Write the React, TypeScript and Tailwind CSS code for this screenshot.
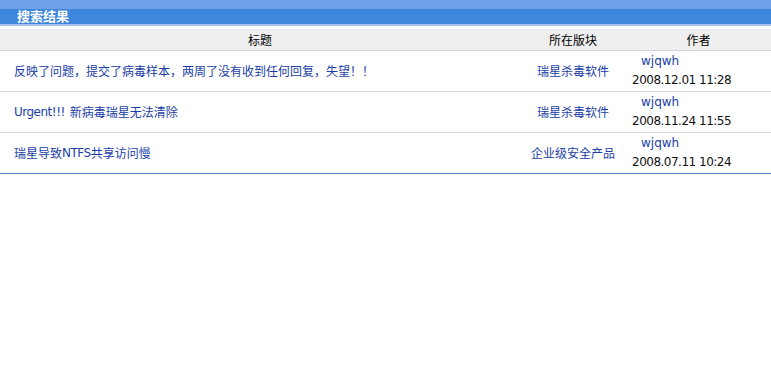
import React from "react";

const cjk = '"Noto Sans CJK SC", "DejaVu Sans", sans-serif';

type Row = {
  title: React.ReactNode;
  board: string;
  author: string;
  date: string;
};

const L = ({ children }: { children: React.ReactNode }) => (
  <span className="text-[12px] tracking-[-0.5px]" style={{ fontFamily: '"DejaVu Sans", sans-serif' }}>
    {children}
  </span>
);

const rows: Row[] = [
  {
    title: "反映了问题，提交了病毒样本，两周了没有收到任何回复，失望！！",
    board: "瑞星杀毒软件",
    author: "wjqwh",
    date: "2008.12.01 11:28",
  },
  {
    title: (
      <>
        <L>Urgent!!!</L>
        <span className="ml-[5px]">新病毒瑞星无法清除</span>
      </>
    ),
    board: "瑞星杀毒软件",
    author: "wjqwh",
    date: "2008.11.24 11:55",
  },
  {
    title: (
      <>
        瑞星导致<L>NTFS</L>共享访问慢
      </>
    ),
    board: "企业级安全产品",
    author: "wjqwh",
    date: "2008.07.11 10:24",
  },
];

export default function App() {
  return (
    <div className="w-[771px] h-[384px] bg-white overflow-hidden" style={{ fontFamily: cjk }}>
      <div className="h-[27px] bg-[linear-gradient(to_bottom,#6ca1e9_0px,#6ca1e9_9px,#3f87dc_9px,#3f87dc_24px,#a3c3ee_24px,#a3c3ee_26px,#ffffff_26px)] flex items-start">
        <span className="pl-[17px] pt-[8px] text-[13px] leading-[16px] font-bold text-white">搜索结果</span>
      </div>
      <div className="mt-[2px] border-t border-[#e4e8ee]">
        <div className="grid grid-cols-[520px_106px_1fr] h-[21px] bg-[#efefef] border-b border-[#cfd6e2] text-[12px] leading-[20px] text-black">
          <div className="text-center">标题</div>
          <div className="text-center">所在版块</div>
          <div className="text-center">作者</div>
        </div>
        {rows.map((r, i) => (
          <div
            key={i}
            className={`grid grid-cols-[520px_106px_1fr] h-[41px] border-b ${
              i === rows.length - 1 ? "border-[#4f86cc]" : "border-[#d3dbe7]"
            }`}
          >
            <div className="flex items-center pl-[14px] text-[12px] text-[#1a3ea6]">{r.title}</div>
            <div className="flex items-center justify-center text-[12px] text-[#1a3ea6]">{r.board}</div>
            <div className="flex flex-col pl-[6px] pt-[1px]" style={{ fontFamily: '"DejaVu Sans", sans-serif' }}>
              <span className="pl-[9px] text-[12px] leading-[19px] text-[#1a3ea6]">{r.author}</span>
              <span className="text-[12px] leading-[19px] tracking-[-0.5px] text-[#111]">{r.date}</span>
            </div>
          </div>
        ))}
      </div>
    </div>
  );
}
